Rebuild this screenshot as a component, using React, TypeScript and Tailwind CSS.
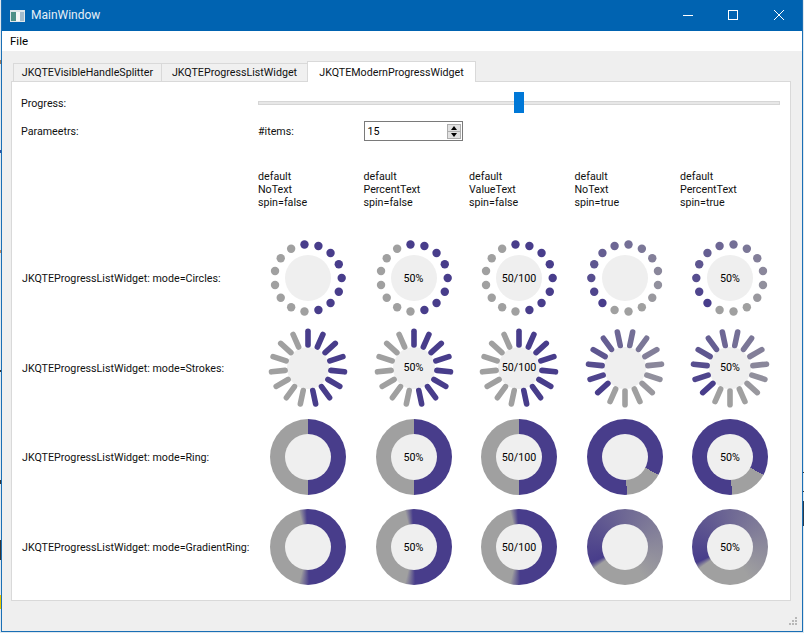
import { Fragment, ReactNode } from "react"

const purple = [72, 61, 139]
const gray = [160, 160, 160]

const mix = (t: number) => {
    const c = purple.map((p, i) => Math.round(p + (gray[i] - p) * Math.min(1, t)))
    return `rgb(${c[0]},${c[1]},${c[2]})`
}

const rad = (deg: number) => (deg * Math.PI) / 180

type Variant = { text: string; spin: boolean }

const variants: Variant[] = [
    { text: "", spin: false },
    { text: "50%", spin: false },
    { text: "50/100", spin: false },
    { text: "", spin: true },
    { text: "50%", spin: true },
]

// colour of the i-th of 15 items, counted from the first item in drawing order
function itemColor(i: number, spin: boolean) {
    if (spin) return mix(i / 12)
    return i < 8 ? mix(0) : mix(1)
}

function Circles({ spin }: { spin: boolean }) {
    const start = spin ? 132 : -96
    return (
        <>
            {Array.from({ length: 15 }, (_, i) => {
                const a = rad(start + i * 24)
                return (
                    <circle
                        key={i}
                        cx={40 + 33.7 * Math.cos(a)}
                        cy={40 + 33.7 * Math.sin(a)}
                        r={4.2}
                        fill={itemColor(i, spin)}
                    />
                )
            })}
            <circle cx={40} cy={40} r={23} fill="#efefef" />
        </>
    )
}

function Strokes({ spin }: { spin: boolean }) {
    const start = spin ? 138 : -90
    return (
        <>
            <circle cx={40} cy={40} r={21} fill="#efefef" />
            {Array.from({ length: 15 }, (_, i) => {
                const a = rad(start + i * 24)
                return (
                    <line
                        key={i}
                        x1={40 + 23 * Math.cos(a)}
                        y1={40 + 23 * Math.sin(a)}
                        x2={40 + 36.7 * Math.cos(a)}
                        y2={40 + 36.7 * Math.sin(a)}
                        stroke={itemColor(i, spin)}
                        strokeWidth={5.6}
                        strokeLinecap="round"
                    />
                )
            })}
        </>
    )
}

function ProgressCell({ mode, variant }: { mode: string; variant: Variant }) {
    const isRing = mode === "Ring" || mode === "GradientRing"
    let ring = ""
    if (mode === "Ring") {
        ring = variant.spin
            ? "bg-[conic-gradient(#483d8b_0deg_118deg,#a0a0a0_118deg_177deg,#483d8b_177deg)]"
            : "bg-[conic-gradient(#483d8b_0deg_180deg,#a0a0a0_180deg)]"
    } else if (mode === "GradientRing") {
        ring = variant.spin
            ? "bg-[conic-gradient(from_245deg,#483d8b_0deg,#a0a0a0_265deg,#a0a0a0_350deg,#483d8b_360deg)]"
            : "bg-[conic-gradient(#483d8b_0deg_178deg,#a0a0a0_194deg_346deg,#483d8b_358deg)]"
    }
    return (
        <div className="relative w-[76px] h-[76px] justify-self-center flex items-center justify-center">
            {isRing ? (
                <div className={`w-[76px] h-[76px] rounded-full flex items-center justify-center ${ring}`}>
                    <div className="w-[46px] h-[46px] rounded-full bg-[#efefef]" />
                </div>
            ) : (
                <svg width={80} height={80} viewBox="0 0 80 80" className="shrink-0 absolute -left-[2px] -top-[2px]">
                    {mode === "Circles" ? <Circles spin={variant.spin} /> : <Strokes spin={variant.spin} />}
                </svg>
            )}
            {variant.text && (
                <span className="absolute inset-0 flex items-center justify-center text-black">{variant.text}</span>
            )}
        </div>
    )
}

function Tab({ children, active, className }: { children: ReactNode; active?: boolean; className: string }) {
    return (
        <div
            className={
                active
                    ? `h-[21px] -mb-px z-10 bg-white border border-[#d9d9d9] border-b-0 flex items-center justify-center ${className}`
                    : `h-[18px] bg-[#f0f0f0] border border-[#d9d9d9] border-b-0 border-r-0 flex items-center justify-center ${className}`
            }
        >
            {children}
        </div>
    )
}

// bits of whatever is behind the window, showing at its edges
const edgeBits = [
    "left-0 top-[60px] h-[4px] bg-[#9c7a5c]",
    "left-0 top-[150px] h-[3px] bg-[#2b4f9e]",
    "left-0 top-[250px] h-[3px] bg-[#c08a60]",
    "left-0 top-[370px] h-[2px] bg-[#333333]",
    "left-0 top-[480px] h-[4px] bg-[#333333]",
    "left-0 top-[540px] h-[20px] bg-[#333333]",
    "left-0 top-[595px] h-[14px] bg-[#e8c800]",
    "right-0 top-[472px] h-px bg-[#333333]",
    "right-0 top-[491px] h-px bg-[#333333]",
    "right-0 top-[501px] h-[25px] bg-[#2a3a4a]",
]

export default function App() {
    const modes = ["Circles", "Strokes", "Ring", "GradientRing"]
    return (
        <div className="relative w-[804px] h-[633px] overflow-hidden bg-[#dfe8ef] font-['Roboto',sans-serif] text-[10.7px] leading-[13px] text-[#111]">
            {edgeBits.map((bit) => (
                <div key={bit} className={`absolute w-px ${bit}`} />
            ))}

            <div className="ml-px w-[802px] h-[632px] border-x border-b border-[#1a6fb5] flex flex-col">
                {/* Title bar */}
                <div className="h-[31px] shrink-0 bg-[#0063b1] flex items-center text-white">
                    <svg width={15} height={12} viewBox="0 0 15 12" className="ml-2 mr-[6px]">
                        <rect width={15} height={12} fill="#dfe6ea" />
                        <rect x={1} y={2} width={5} height={9} fill="#4f9088" />
                        <rect x={6} y={2} width={4} height={9} fill="#f8f8f8" />
                        <rect x={10} y={2} width={4} height={9} fill="#a4bccc" />
                    </svg>
                    <span className="text-[12px] text-[#e6eff7]">MainWindow</span>
                    <div className="ml-auto flex items-center">
                        <svg width={46} height={31} viewBox="0 0 46 31">
                            <rect x={19} y={15} width={10} height={1} fill="#fff" />
                        </svg>
                        <svg width={46} height={31} viewBox="0 0 46 31">
                            <rect x={18.5} y={10.5} width={9} height={9} fill="none" stroke="#fff" />
                        </svg>
                        <svg width={46} height={31} viewBox="0 0 46 31">
                            <path d="M18 10L28 20M28 10L18 20" stroke="#fff" fill="none" />
                        </svg>
                    </div>
                </div>

                {/* Menu */}
                <div className="h-5 shrink-0 bg-white flex items-center pl-2 text-black text-[11.5px]">File</div>

                {/* Central area */}
                <div className="flex-1 bg-[#efefef] flex flex-col pl-[9px] pr-[11px] pt-[10px] min-h-0">
                    <div className="flex items-end pl-[2px] h-5 shrink-0">
                        <Tab className="w-[148px]">JKQTEVisibleHandleSplitter</Tab>
                        <Tab className="w-[146px]">JKQTEProgressListWidget</Tab>
                        <Tab active className="w-[169px]">JKQTEModernProgressWidget</Tab>
                    </div>

                    <div className="h-[520px] shrink-0 bg-white border border-[#d9d9d9] pt-[7px] pl-[9px] grid grid-cols-[231.5px_repeat(5,100px)] grid-rows-[28px_28px_88px_90px_89px_90px_90px] gap-x-[5.5px] items-center">
                        <div className="pt-px">Progress:</div>
                        <div className="col-span-5 relative h-[22px] flex items-center">
                            <div className="w-full h-1 bg-[#e7e7e7] border border-[#d6d6d6]" />
                            <div className="absolute left-[256px] top-0 w-[10px] h-[21px] bg-[#0078d7]" />
                        </div>

                        <div className="pt-px">Parameetrs:</div>
                        <div className="pt-px">#items:</div>
                        <div className="w-[99px] h-5 border border-[#7a7a7a] flex items-center justify-between pl-[3px] pr-px bg-white text-black">
                            <span>15</span>
                            <div className="flex flex-col w-[14px] h-[15px]">
                                <div className="flex-1 bg-[#e1e1e1] border border-[#adadad] flex items-center justify-center">
                                    <div className="w-0 h-0 border-x-[3px] border-x-transparent border-b-[4px] border-b-black" />
                                </div>
                                <div className="flex-1 bg-[#e1e1e1] border border-[#adadad] border-t-0 flex items-center justify-center">
                                    <div className="w-0 h-0 border-x-[3px] border-x-transparent border-t-[4px] border-t-black" />
                                </div>
                            </div>
                        </div>
                        <div className="col-span-3" />

                        <div />
                        {variants.map((v, i) => (
                            <div key={i} className="whitespace-pre-line">
                                {`default\n${v.text === "" ? "NoText" : v.text === "50%" ? "PercentText" : "ValueText"}\nspin=${v.spin}`}
                            </div>
                        ))}

                        {modes.map((mode) => (
                            <Fragment key={mode}>
                                <div className="whitespace-nowrap pl-px pt-px">JKQTEProgressListWidget: mode={mode}:</div>
                                {variants.map((v, i) => (
                                    <ProgressCell key={i} mode={mode} variant={v} />
                                ))}
                            </Fragment>
                        ))}
                    </div>

                    {/* Size grip */}
                    <div className="flex-1 flex items-end justify-end -mr-[11px]">
                        <svg width={12} height={12} viewBox="0 0 12 12" className="mb-[2px] mr-[2px]">
                            {[[7, 0], [4, 3], [7, 3], [1, 6], [4, 6], [7, 6]].map(([x, y], i) => (
                                <rect key={i} x={x} y={y} width={2} height={2} fill="#b8b8b8" />
                            ))}
                        </svg>
                    </div>
                </div>
            </div>
        </div>
    )
}
